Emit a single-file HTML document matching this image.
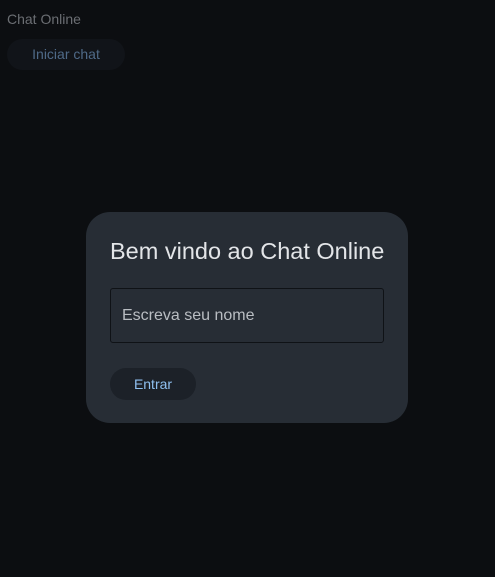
<!DOCTYPE html>
<html><head><meta charset="utf-8"><style>
html,body{margin:0;padding:0;width:495px;height:577px;background:#0c0e11;overflow:hidden;font-family:"Liberation Sans",sans-serif;}
.t{position:absolute;left:7px;top:11px;font-size:14px;color:#6b6e73;}
.b1{position:absolute;left:7px;top:39px;width:118px;height:31px;border-radius:16px;background:#111419;color:#4f6a88;font-size:14px;text-align:center;line-height:31px;}
.card{position:absolute;left:86px;top:212px;width:322px;height:211px;border-radius:24px;background:#272d35;}
.h{position:absolute;left:24px;top:26px;font-size:23.5px;color:#e3e5e8;white-space:nowrap;}
.in{position:absolute;left:24px;top:76px;height:53px;border:1px solid #0f1216;border-radius:3px;color:#b9bdc2;font-size:16px;line-height:53px;padding-left:11px;box-sizing:content-box;width:261px;}
.e{position:absolute;left:24px;top:156px;width:86px;height:32px;border-radius:16px;background:#1c2128;color:#8fc0f0;font-size:14px;text-align:center;line-height:32px;}
</style></head><body>
<div class="t">Chat Online</div>
<div class="b1">Iniciar chat</div>
<div class="card">
<div class="h">Bem vindo ao Chat Online</div>
<div class="in">Escreva seu nome</div>
<div class="e">Entrar</div>
</div>
</body></html>
